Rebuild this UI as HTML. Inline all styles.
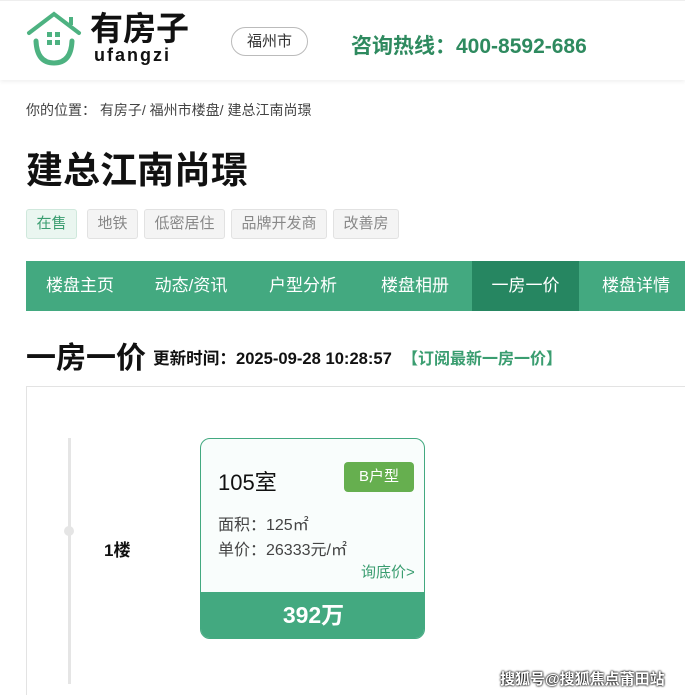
<!DOCTYPE html>
<html style="width:685px;height:695px;overflow:hidden"><head><meta charset="utf-8"><style>
*{margin:0;padding:0;box-sizing:border-box}
body{width:685px;height:695px;overflow:hidden;background:#fff;font-family:"Liberation Sans","Noto Sans CJK SC",sans-serif;position:relative;color:#111}
.abs{position:absolute;white-space:nowrap}
.hdr{position:absolute;left:0;top:0;width:685px;height:80px;background:#fff;box-shadow:0 2px 4px rgba(0,0,0,.06);border-top:1px solid #eee}
.city{left:231px;top:26px;width:77px;height:29px;border:1px solid #bbb;border-radius:15px;font-size:15px;line-height:27px;text-align:center;color:#333}
.tag{position:absolute;top:209px;height:30px;border:1px solid #e2e2e2;background:#f4f4f4;border-radius:3px;font-size:15px;line-height:28px;text-align:center;color:#888}
.nav{position:absolute;left:26px;top:261px;width:659px;height:50px;background:#43a980}
.nav span{position:absolute;top:0;height:50px;line-height:50px;color:#fff;font-size:17px;text-align:center}
</style></head><body>
<div class="hdr">
<svg class="abs" style="left:26px;top:8px" width="60" height="60" viewBox="0 0 60 60">
<path d="M3 24 L28 5 L53 24" fill="none" stroke="#4db281" stroke-width="4" stroke-linecap="round"/>
<path d="M45 8 L45 16" stroke="#4db281" stroke-width="4"/>
<path d="M10 32 Q11 54 28 54 Q45 54 46 32" fill="none" stroke="#4db281" stroke-width="5" stroke-linecap="round"/>
<rect x="21" y="23" width="5" height="5" fill="#4db281"/><rect x="29" y="23" width="5" height="5" fill="#4db281"/>
<rect x="21" y="31" width="5" height="5" fill="#4db281"/><rect x="29" y="31" width="5" height="5" fill="#4db281"/>
</svg>
<div class="abs" style="left:90px;top:8px;font-size:33px;font-weight:bold;line-height:40px;color:#111">有房子</div>
<div class="abs" style="left:94px;top:44px;font-size:18px;font-weight:bold;color:#111;letter-spacing:2px">ufangzi</div>
<div class="abs city">福州市</div>
<div class="abs" style="left:351px;top:29px;font-size:21px;font-weight:bold;color:#2e8a5f">咨询热线：400-8592-686</div>
</div>
<div class="abs" style="left:26px;top:100px;font-size:14px;color:#444">你的位置：&nbsp;有房子/ 福州市楼盘/ 建总江南尚璟</div>
<div class="abs" style="left:26px;top:140px;font-size:37px;font-weight:bold;color:#111">建总江南尚璟</div>
<div class="tag" style="left:26px;width:51px;background:#eaf6f0;border-color:#cfe8dc;color:#3a9d70">在售</div>
<div class="tag" style="left:87px;width:51px">地铁</div>
<div class="tag" style="left:144px;width:81px">低密居住</div>
<div class="tag" style="left:231px;width:96px">品牌开发商</div>
<div class="tag" style="left:333px;width:66px">改善房</div>
<div class="nav">
<span style="left:0;width:108px">楼盘主页</span>
<span style="left:110px;width:110px">动态/资讯</span>
<span style="left:222px;width:110px">户型分析</span>
<span style="left:334px;width:110px">楼盘相册</span>
<span style="left:446px;width:107px;background:#268661">一房一价</span>
<span style="left:555px;width:110px">楼盘详情</span>
</div>
<div class="abs" style="left:26px;top:333px;font-size:30px;font-weight:bold;color:#111">一房一价</div>
<div class="abs" style="left:153px;top:345px;font-size:16.6px;font-weight:bold;color:#111">更新时间：2025-09-28 10:28:57</div>
<div class="abs" style="left:402px;top:345px;font-size:16px;font-weight:bold;color:#3a9d70">【订阅最新一房一价】</div>
<div class="abs" style="left:26px;top:386px;width:680px;height:320px;border:1px solid #e3e3e3"></div>
<div class="abs" style="left:68px;top:438px;width:3px;height:246px;background:#e5e5e5"></div>
<div class="abs" style="left:64px;top:526px;width:10px;height:10px;border-radius:5px;background:#e5e5e5"></div>
<div class="abs" style="left:104px;top:536px;font-size:17px;font-weight:bold">1楼</div>
<div class="abs" style="left:200px;top:438px;width:225px;height:201px;border:1px solid #43a980;border-radius:10px;background:#f9fdfc;overflow:hidden">
<div class="abs" style="left:17px;top:26px;font-size:22px;color:#111">105室</div>
<div class="abs" style="left:143px;top:23px;width:70px;height:30px;background:#66af4f;border-radius:4px;color:#fff;font-size:15px;line-height:30px;text-align:center">B户型</div>
<div class="abs" style="left:17px;top:72px;font-size:16px;color:#444">面积：125㎡</div>
<div class="abs" style="left:17px;top:97px;font-size:16px;color:#444">单价：26333元/㎡</div>
<div class="abs" style="left:160px;top:122px;font-size:15px;color:#3a9d70">询底价&gt;</div>
<div class="abs" style="left:0;top:153px;width:225px;height:48px;background:#43a980;color:#fff;font-size:23px;font-weight:bold;line-height:46px;text-align:center">392万</div>
</div>
<div class="abs" style="left:500px;top:668px;font-size:15px;font-weight:bold;color:#fff;text-shadow:0 0 2px #000,0 0 2px #000">搜狐号@搜狐焦点莆田站</div>
</body></html>
